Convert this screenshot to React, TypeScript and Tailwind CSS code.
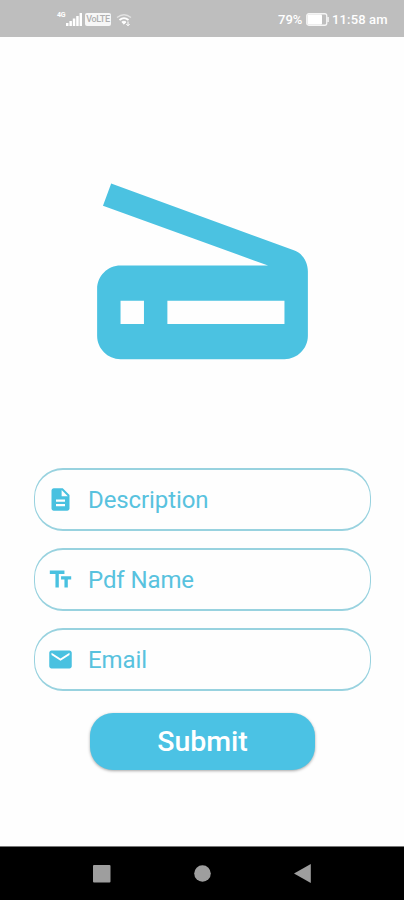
import type { ReactNode } from 'react'
import { MdDescription, MdEmail, MdScanner, MdTextFields } from 'react-icons/md'

interface FieldProps {
  icon: ReactNode
  label: string
}

/** Rounded text input with a leading icon. */
function Field({ icon, label }: FieldProps) {
  return (
    <label className="flex h-[63px] items-center rounded-[29px] border-x border-y-2 border-[#98d2df] pl-3 text-[#49c1e0]">
      <span className="shrink-0 text-[27px]">{icon}</span>
      <input
        type="text"
        placeholder={label}
        aria-label={label}
        className="ml-[14px] w-[250px] bg-transparent pt-px text-[24px] tracking-[-0.1px] outline-none placeholder:text-[#58c2de]"
      />
    </label>
  )
}

/** Network label, signal bars, VoLTE badge and Wi-Fi on the left; battery and clock on the right. */
function StatusBar() {
  return (
    <header className="flex h-[37px] shrink-0 items-center justify-between bg-[#bebebe] pt-[2px] pr-4 pl-[57px] text-white">
      <div className="flex items-center">
        <span className="mb-2 w-[9px] text-[7px] leading-none font-bold tracking-[-0.3px]">4G</span>
        <svg className="h-[13px] w-4" viewBox="0 0 16 13" fill="currentColor" aria-hidden>
          <path d="M0 10h2.5v3H0zM3.4 8h2.5v5h-2.5zM6.8 5.5h2.5V13h-2.5zM10.2 3h2.5v10h-2.5zM13.6 0H16v13h-2.4z" />
        </svg>
        <span className="ml-[3px] flex h-[13px] w-[26px] items-center justify-center rounded-[2px] bg-[#f7f7f7] text-[9px] leading-none font-medium tracking-[-0.3px] text-[#b0b0b0]">
          VoLTE
        </span>
        <svg className="ml-[5px] h-[14px] w-4" viewBox="0 0 16 14" fill="none" stroke="currentColor" aria-hidden>
          <path d="M1 4.5Q8-1 15 4.5" strokeWidth="1.3" opacity="0.55" />
          <path d="M3.5 7Q8 3.2 12.5 7" strokeWidth="1.8" />
          <path d="M5.8 9Q8 7.4 10 9L8 11.2z" fill="currentColor" />
          <path d="M12 8.5v4M10.3 11l1.7 1.8 1.7-1.8" />
        </svg>
      </div>
      <div className="flex items-center text-[13px] leading-none font-medium">
        <span className="w-[28px]">79%</span>
        <svg className="h-[13px] w-[23px]" viewBox="0 0 23 13" aria-hidden>
          <rect x="0.75" y="0.75" width="20" height="11.5" rx="2" fill="none" stroke="white" strokeWidth="1.3" opacity="0.85" />
          <rect x="1.5" y="1.5" width="14.5" height="10" rx="1" fill="white" />
          <path d="M21.5 4h1.2v5h-1.2z" fill="white" />
        </svg>
        <span className="ml-[3px] w-[56px] tracking-[0.15px] whitespace-nowrap">11:58 am</span>
      </div>
    </header>
  )
}

function NavigationBar() {
  return (
    <nav className="h-[54px] shrink-0 border-t border-[#777777] bg-black">
      <svg className="h-[53px] w-full" viewBox="0 0 404 53" fill="#9e9e9e" aria-hidden>
        <rect x="93" y="18" width="17.5" height="17.5" rx="1" />
        <circle cx="202.5" cy="26.5" r="8.3" />
        <path d="M294 26.5l16.8-9.5v19z" />
      </svg>
    </nav>
  )
}

export default function App() {
  return (
    <div className="flex h-[900px] w-[404px] flex-col overflow-hidden bg-[#fefefe] font-['Roboto',sans-serif]">
      <StatusBar />
      <main className="flex flex-1 flex-col px-[34px] pt-[88px]">
        <MdScanner className="ml-7 size-[281px] shrink-0 text-[#4bc2e1]" aria-hidden />
        <form className="mt-[62px] flex w-[337px] flex-col gap-[17px]" onSubmit={(event) => event.preventDefault()}>
          <Field icon={<MdDescription />} label="Description" />
          <Field icon={<MdTextFields />} label="Pdf Name" />
          <Field icon={<MdEmail />} label="Email" />
          <button
            type="submit"
            className="mt-[5px] ml-[56px] h-[57px] w-[225px] cursor-pointer rounded-[23px] bg-[#4bc2e4] pt-[2px] text-[28.5px] leading-none font-medium text-white shadow-[0_1px_3px_rgba(0,0,0,0.35)]"
          >
            Submit
          </button>
        </form>
      </main>
      <NavigationBar />
    </div>
  )
}
